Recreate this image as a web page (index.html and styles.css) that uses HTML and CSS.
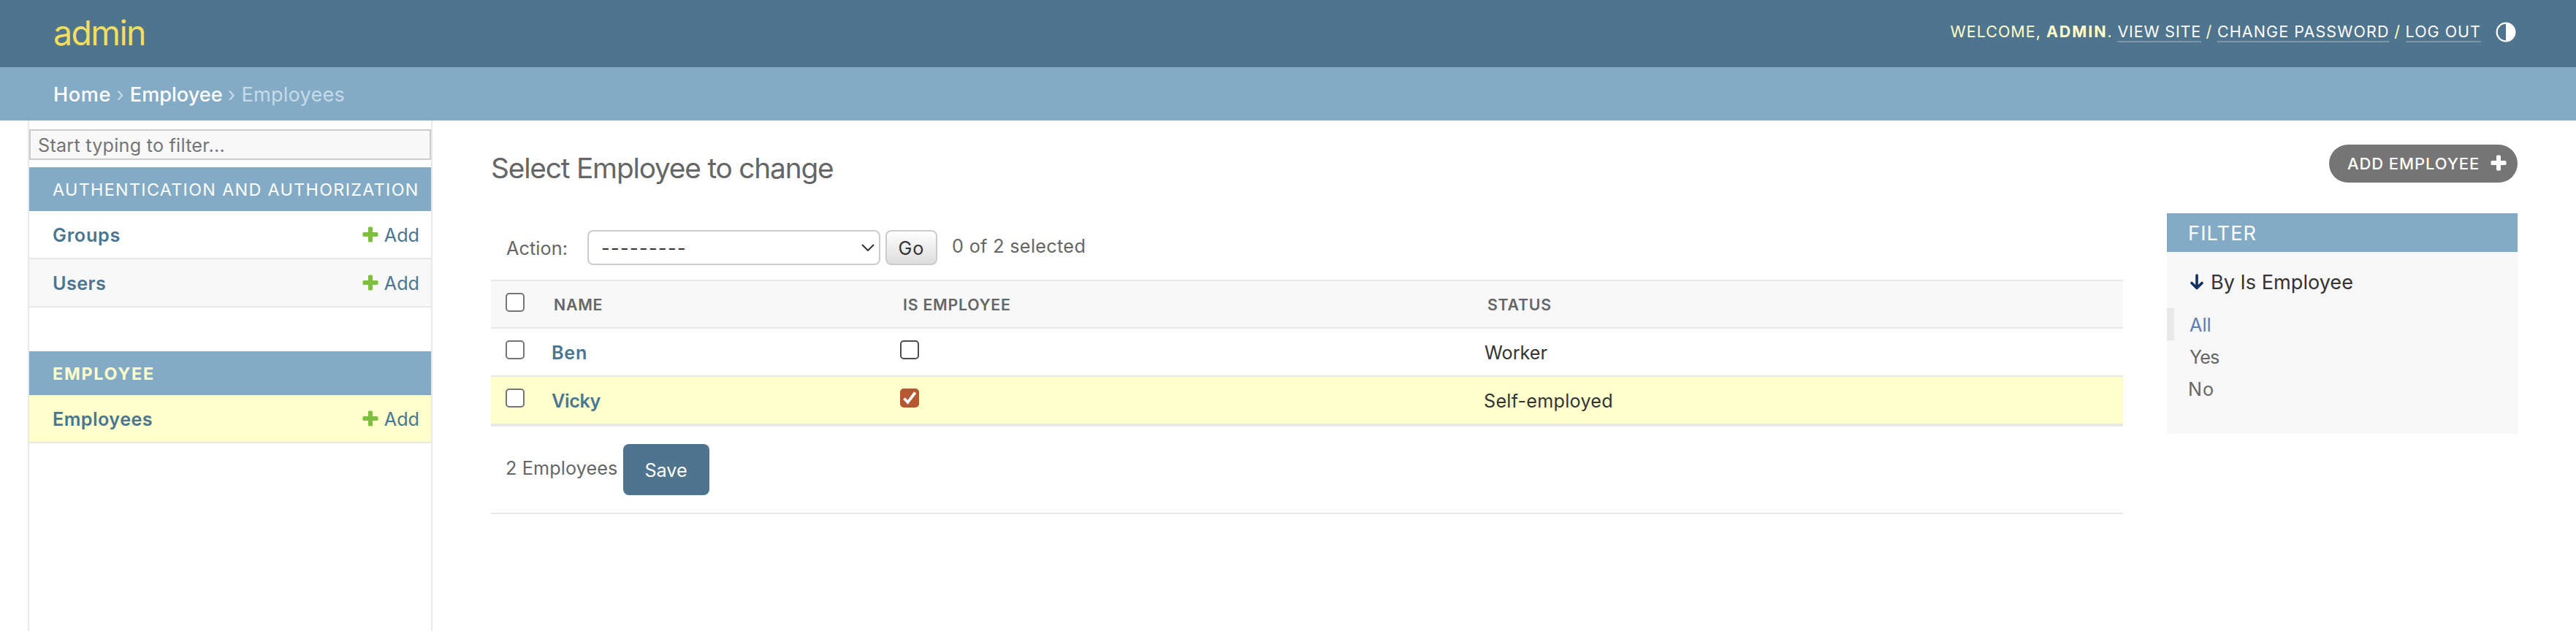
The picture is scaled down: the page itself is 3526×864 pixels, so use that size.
FILE: index.html
```html
<!DOCTYPE html>
<html lang="en">
<head>
<meta charset="utf-8">
<title>Select Employee to change</title>
<link rel="stylesheet" href="styles.css">
</head>
<body>
<header class="header">
  <h1 class="site-name">admin</h1>
  <div class="user-tools">
    <span class="welcome">Welcome,</span>
    <strong class="username">admin</strong><span class="dot">.</span>
    <a class="tool-link view">View site</a>
    <span class="slash">/</span>
    <a class="tool-link change">Change password</a>
    <span class="slash">/</span>
    <a class="tool-link">Log out</a>
    <svg class="theme-icon" viewBox="0 0 28 28"><circle cx="14" cy="14" r="12.300" fill="none" stroke="#fff" stroke-width="2.300"/><path d="M14 1.600a12.400 12.400 0 0 1 0 24.800z" fill="#fff"/></svg>
  </div>
</header>
<nav class="breadcrumbs">
  <a class="crumb home">Home</a><span class="sep">›</span><a class="crumb">Employee</a><span class="sep">›</span><span class="current">Employees</span>
</nav>
<div class="layout">
  <aside class="sidebar">
    <div class="nav-filter">Start typing to filter...</div>
    <section class="app">
      <h2 class="caption">Authentication and Authorization</h2>
      <div class="model"><a class="model-name wide">Groups</a><a class="add"><svg class="plus" viewBox="0 0 22 22"><path d="M8 2q0-1.500 1.500-1.500h3q1.500 0 1.500 1.500v6h6q1.500 0 1.500 1.500v3q0 1.500-1.500 1.500h-6v6q0 1.500-1.500 1.500h-3q-1.500 0-1.500-1.500v-6h-6q-1.500 0-1.500-1.500v-3q0-1.500 1.500-1.500h6z"/></svg><span>Add</span></a></div>
      <div class="model alt"><a class="model-name">Users</a><a class="add"><svg class="plus" viewBox="0 0 22 22"><path d="M8 2q0-1.500 1.500-1.500h3q1.500 0 1.500 1.500v6h6q1.500 0 1.500 1.500v3q0 1.500-1.500 1.500h-6v6q0 1.500-1.500 1.500h-3q-1.500 0-1.500-1.500v-6h-6q-1.500 0-1.500-1.500v-3q0-1.500 1.500-1.500h6z"/></svg><span>Add</span></a></div>
    </section>
    <section class="app">
      <h2 class="caption active">Employee</h2>
      <div class="model selected"><a class="model-name">Employees</a><a class="add"><svg class="plus" viewBox="0 0 22 22"><path d="M8 2q0-1.500 1.500-1.500h3q1.500 0 1.500 1.500v6h6q1.500 0 1.500 1.500v3q0 1.500-1.500 1.500h-6v6q0 1.500-1.500 1.500h-3q-1.500 0-1.500-1.500v-6h-6q-1.500 0-1.500-1.500v-3q0-1.500 1.500-1.500h6z"/></svg><span>Add</span></a></div>
    </section>
  </aside>
  <main class="main">
    <div class="title-row">
      <h2 class="title">Select Employee to change</h2>
      <a class="add-button"><span>Add Employee</span><svg class="plus" viewBox="0 0 22 22"><path d="M8 2q0-1.500 1.500-1.500h3q1.500 0 1.500 1.500v6h6q1.500 0 1.500 1.500v3q0 1.500-1.500 1.500h-6v6q0 1.500-1.500 1.500h-3q-1.500 0-1.500-1.500v-6h-6q-1.500 0-1.500-1.500v-3q0-1.500 1.500-1.500h6z"/></svg></a>
    </div>
    <div class="content">
      <div class="changelist">
        <div class="actions">
          <span class="action-label">Action:</span>
          <div class="select"><span class="dashes">---------</span><svg class="chevron" viewBox="0 0 18 10"><path d="M1 1l8 8 8-8" fill="none" stroke="#333" stroke-width="2"/></svg></div>
          <button class="go">Go</button>
          <span class="counter">0 of 2 selected</span>
        </div>
        <table class="results">
          <colgroup><col class="c-check"><col class="c-name"><col class="c-is"><col class="c-status"></colgroup>
          <thead>
            <tr><th><input type="checkbox" class="box"></th><th>Name</th><th>Is Employee</th><th>Status</th></tr>
          </thead>
          <tbody>
            <tr><td><input type="checkbox" class="box"></td><td><a class="cell row-link">Ben</a></td><td><input type="checkbox" class="box dark"></td><td><span class="cell">Worker</span></td></tr>
            <tr class="selected"><td><input type="checkbox" class="box"></td><td><a class="cell row-link tight">Vicky</a></td><td><span class="box checked"><svg viewBox="0 0 26 26"><path d="M5.500 13.500l5 5.300L20.700 5.500" fill="none" stroke="#fff" stroke-width="3.800"/></svg></span></td><td><span class="cell loose">Self-employed</span></td></tr>
          </tbody>
        </table>
        <div class="paginator"><span class="total">2 Employees</span><button class="save">Save</button></div>
      </div>
      <aside class="filter">
        <h2 class="filter-title">Filter</h2>
        <div class="filter-name"><svg class="arrow" viewBox="0 0 18 22"><path d="M9 2v17M2 12.500l7 7 7-7" fill="none" stroke="#11305f" stroke-width="3.600" stroke-linecap="round" stroke-linejoin="round"/></svg><span>By Is Employee</span></div>
        <div class="choice on">All</div>
        <div class="choice yes">Yes</div>
        <div class="choice no">No</div>
      </aside>
    </div>
  </main>
</div>
</body>
</html>
```
FILE: styles.css
```css
* { box-sizing: border-box; }
body { margin: 0; height: 864px; overflow: hidden; background: #fff; color: #333; font-family: Inter, "Liberation Sans", sans-serif; font-size: 25.2px; }
h1, h2 { margin: 0; font-weight: 400; }
.header { height: 92px; padding: 0 82px 0 73px; display: flex; align-items: center; justify-content: space-between; background: #4f748d; color: #ffffcc; }
.site-name { margin-top: -2px; font-size: 46.500px; letter-spacing: -1.640px; color: #f5dd5d; }
.user-tools { display: flex; align-items: baseline; margin-top: -5px; font-size: 21.500px; line-height: 26px; letter-spacing: 1px; text-transform: uppercase; }
.username { font-weight: 700; margin-left: 7px; letter-spacing: 1.900px; }
.dot { width: 14px; }
.tool-link { color: #fff; border-bottom: 2px solid #7b98ab; }
.view { letter-spacing: 0.820px; }
.change { letter-spacing: 1.090px; }
.slash { width: 22px; text-align: center; }
.theme-icon { width: 28px; height: 28px; margin-left: 20px; align-self: center; }
.breadcrumbs { height: 73px; padding: 2px 73px 0; display: flex; align-items: center; background: #84abc5; color: #c7dae7; font-size: 27.100px; }
.crumb { color: #fff; font-weight: 500; }
.home { letter-spacing: 0.600px; }
.sep { margin: 0 8.200px 0 7.300px; }
.current { letter-spacing: 0.230px; }
.layout { display: flex; height: 699px; }
.sidebar { width: 554px; margin-left: 38px; padding-top: 12px; border: solid #e8e8e8; border-width: 0 2px; }
.nav-filter { height: 42px; margin-bottom: 10px; padding: 2px 0 0 10px; display: flex; align-items: center; border: 2px solid #ccc; background: #f8f8f8; color: #757575; letter-spacing: 0.230px; }
.app { margin-bottom: 60px; }
.caption { height: 60px; padding: 1px 0 0 32px; display: flex; align-items: center; background: #84abc5; color: #fff; font-size: 23.300px; letter-spacing: 1.340px; text-transform: uppercase; white-space: nowrap; }
.caption.active { color: #ffffcc; font-weight: 700; letter-spacing: 1.760px; }
.model { height: 66px; padding: 2px 16px 0 32px; display: flex; align-items: center; justify-content: space-between; border-bottom: 2px solid #e8e8e8; color: #4b7690; }
.model.alt { background: #f8f8f8; }
.selected { background: #ffffcc; }
.model-name { font-weight: 600; letter-spacing: 0.450px; }
.model-name.wide { letter-spacing: 0.760px; }
.add { display: flex; align-items: center; gap: 8px; }
.plus { width: 22px; height: 22px; margin-bottom: 3px; fill: #7fbf3f; }
.main { flex: 1; padding: 33px 80px 0; }
.title-row { height: 94px; display: flex; justify-content: space-between; align-items: flex-start; }
.title { padding-top: 6px; line-height: 52px; font-size: 38.800px; letter-spacing: -1.190px; color: #666; }
.add-button { height: 52px; width: 258px; padding: 0 15px 0 25px; display: flex; align-items: center; justify-content: space-between; border-radius: 26px; background: #757575; color: #fff; font-size: 22px; font-weight: 500; letter-spacing: 0.900px; text-transform: uppercase; white-space: nowrap; }
.add-button .plus { fill: #fff; }
.content { display: flex; gap: 60px; align-items: flex-start; }
.changelist { width: 2234px; }
.actions { height: 91px; padding: 23px 0 20px 20px; display: flex; align-items: center; color: #666; }
.action-label { width: 112px; padding: 2px 0 0 1px; letter-spacing: 0.100px; }
.select { width: 401px; height: 48px; padding: 0 6px 0 17px; display: flex; align-items: center; justify-content: space-between; border: 2px solid #ccc; border-radius: 8px; background: #fff; color: #333; }
.dashes { padding-top: 2px; letter-spacing: 1.430px; }
.chevron { width: 18px; height: 10px; }
.go { width: 71px; height: 48px; margin: 0 20px 0 7px; padding: 2px 0 0; border: 2px solid #ccc; border-radius: 8px; background: linear-gradient(#fff, #ddd); color: #333; font: inherit; letter-spacing: 1px; }
.counter { margin-bottom: 4px; letter-spacing: 0.330px; }
.results { width: 100%; table-layout: fixed; border-collapse: separate; border-spacing: 0; border-bottom: 2px solid #e8e8e8; }
.c-check { width: 66px; }
.c-name { width: 478px; }
.c-is { width: 800px; }
th { height: 67px; padding: 0 16px 0 20px; border: solid #e8e8e8; border-width: 2px 0; background: #f8f8f8; color: #666; font-size: 21.300px; font-weight: 600; letter-spacing: 0.760px; text-align: left; text-transform: uppercase; }
td { height: 66px; padding: 0 16px; border-bottom: 2px solid #e8e8e8; }
td:first-child { padding-left: 20px; }
.cell { display: block; padding-top: 2px; }
.row-link { padding-left: 1px; color: #4b7690; font-weight: 600; letter-spacing: 0.700px; }
.row-link.tight { letter-spacing: -0.360px; }
.loose { margin-left: -1px; letter-spacing: 0.240px; }
.box { appearance: none; display: block; width: 26px; height: 26px; margin: 0 0 6px; border: 2px solid #757575; border-radius: 5px; background: #fff; }
.box.dark { border-color: #4d4d4d; }
.box.checked { border: 0; background: #b35833; }
.box svg { display: block; width: 26px; height: 26px; }
.paginator { height: 120px; padding: 24px 0 24px 20px; display: flex; border-bottom: 2px solid #e8e8e8; color: #666; }
.total { line-height: 66px; letter-spacing: 0.130px; }
.save { width: 118px; height: 70px; padding: 2px 0 0; margin-left: 7px; border: 0; border-radius: 8px; background: #4f748d; color: #fff; font: inherit; }
.filter { width: 480px; height: 302px; background: #f8f8f8; }
.filter-title { height: 53px; padding: 2px 0 0 29px; display: flex; align-items: center; background: #84abc5; color: #fff; font-size: 27.100px; letter-spacing: 1.170px; text-transform: uppercase; }
.filter-name { height: 77px; padding: 6px 0 0 32px; display: flex; align-items: center; gap: 10px; font-size: 27.100px; }
.arrow { width: 18px; height: 22px; margin-bottom: 1px; }
.choice { height: 44px; padding: 2px 0 0 30px; display: flex; align-items: center; color: #666; }
.choice.on { padding-left: 21px; border-left: 10px solid #e8e8e8; color: #5b7db5; }
.choice.yes { padding-left: 31px; letter-spacing: -0.900px; }
.choice.no { padding-left: 29px; letter-spacing: 1px; }
```
